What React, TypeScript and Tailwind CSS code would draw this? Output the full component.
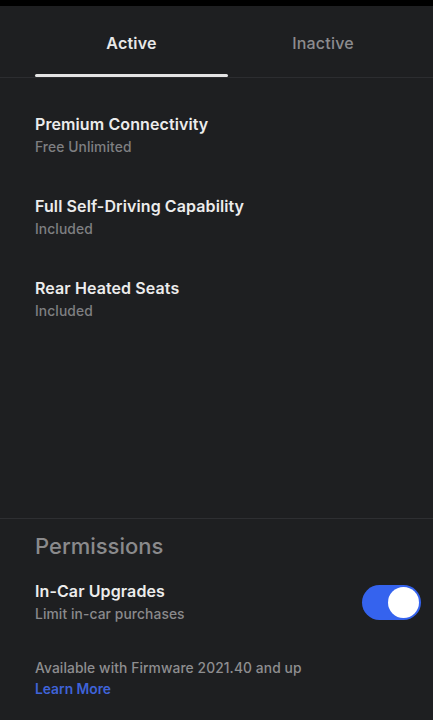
export default function App() {
	const items = [
		{ title: "Premium Connectivity", sub: "Free Unlimited" },
		{ title: "Full Self-Driving Capability", sub: "Included" },
		{ title: "Rear Heated Seats", sub: "Included" },
	];
	return (
		<div
			className="w-[433px] h-[720px] bg-[#1e1f21] flex flex-col overflow-hidden"
			style={{ fontFamily: "Inter, 'Noto Sans', sans-serif" }}
		>
			<div className="h-[6px] bg-black" />
			{/* Tabs */}
			<div className="flex border-b border-[#2c2d30] pl-[35px] pr-[15px]">
				<div className="w-[193px] flex flex-col items-center">
					<div className="pt-[26px] pb-[20px] text-[16px] font-semibold text-[#e8e8e8] leading-[22px] tracking-[0.2px]">
						Active
					</div>
					<div className="h-[3px] w-full bg-[#e4e4e4] rounded-full" />
				</div>
				<div className="flex-1 flex justify-center">
					<div className="pt-[26px] text-[16px] font-medium text-[#8c8c8e] leading-[22px] tracking-[0.2px]">
						Inactive
					</div>
				</div>
			</div>

			{/* Active items */}
			<div className="flex flex-col px-[35px] pt-[35px] gap-[38px] flex-1">
				{items.map((item, i) => (
					<div key={i} className="flex flex-col gap-[2px]">
						<div className="text-[16px] font-semibold text-[#ececec] leading-[22px] tracking-[0.1px]">
							{item.title}
						</div>
						<div className="text-[13.8px] font-medium text-[#7f7f82] leading-[20px] tracking-[0.1px]">
							{item.sub}
						</div>
					</div>
				))}
			</div>

			{/* Permissions */}
			<div className="border-t border-[#2e2f32] pl-[35px] pr-[12px] pt-[13px] pb-[21px]">
				<div className="text-[22px] font-medium text-[#8a8a8c] leading-[28px]">
					Permissions
				</div>
				<div className="flex items-center justify-between mt-[20px]">
					<div className="flex flex-col">
						<div className="text-[16px] font-semibold text-[#ececec] leading-[22px] tracking-[0.1px]">
							In-Car Upgrades
						</div>
						<div className="text-[13.8px] font-medium text-[#8a8a8c] leading-[20px] mt-[2px] tracking-[0.1px]">
							Limit in-car purchases
						</div>
					</div>
					<div className="w-[59px] h-[35px] rounded-full bg-[#3563ee] flex items-center justify-end p-[2px]">
						<div className="w-[31px] h-[31px] rounded-full bg-white" />
					</div>
				</div>
				<div className="mt-[34px] text-[13.8px] font-medium text-[#8e8e90] leading-[20px] tracking-[0.1px]">
					Available with Firmware 2021.40 and up
				</div>
				<div className="mt-[1px] text-[13.8px] font-semibold text-[#3f63d8] leading-[20px]">
					Learn More
				</div>
			</div>
		</div>
	);
}
